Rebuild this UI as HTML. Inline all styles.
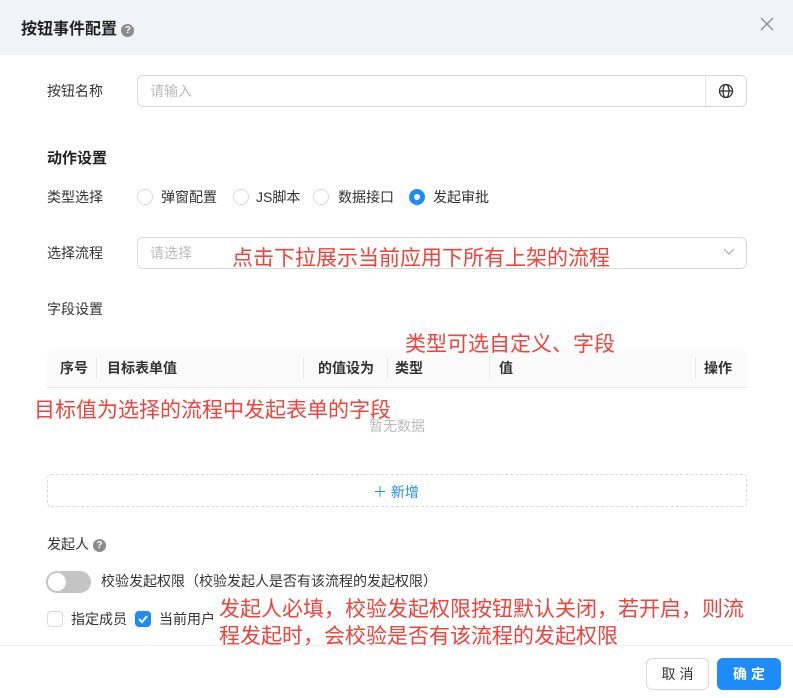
<!DOCTYPE html>
<html><head><meta charset="utf-8"><style>
*{margin:0;padding:0;box-sizing:border-box}
body{width:793px;height:698px;background:#fff;font-family:"Liberation Sans","Noto Sans CJK SC",sans-serif;color:#333;position:relative;overflow:hidden;font-size:14px}
.a{position:absolute;white-space:nowrap}
.red{color:#f2423a;font-size:21px;line-height:25px;z-index:5}
.q{display:inline-block;width:13px;height:13px;border-radius:50%;background:#8c8c8c;color:#fff;font-size:10px;line-height:13px;text-align:center;font-weight:bold;vertical-align:1px}
.radio{position:absolute;width:16px;height:16px;border:1px solid #d9d9d9;border-radius:50%}
.th{position:absolute;top:358px;font-weight:bold;font-size:14px}
.sep{position:absolute;top:357px;width:1px;height:22px;background:#e8e8e8}
</style></head><body>
<div class="a" style="left:0;top:0;width:793px;height:55px;background:#f0f3f8"></div>
<div class="a" style="left:21px;top:15px;font-size:16px;font-weight:bold;color:#222">按钮事件配置 <span class="q">?</span></div>
<svg class="a" style="left:760px;top:17px" width="14" height="14" viewBox="0 0 14 14" stroke="#888" stroke-width="1.3"><path d="M1 1l12 12M13 1L1 13"/></svg>

<div class="a" style="left:47px;top:81px">按钮名称</div>
<div class="a" style="left:137px;top:75px;width:610px;height:32px;border:1px solid #d9d9d9;border-radius:6px"></div>
<div class="a" style="left:705px;top:76px;width:1px;height:30px;background:#e5e5e5"></div>
<div class="a" style="left:150px;top:81px;color:#bbb">请输入</div>
<svg class="a" style="left:718px;top:83px" width="16" height="16" viewBox="0 0 16 16" fill="none" stroke="#333" stroke-width="1.3"><circle cx="8" cy="8" r="6.5"/><ellipse cx="8" cy="8" rx="3" ry="6.5"/><line x1="1.5" y1="8" x2="14.5" y2="8"/></svg>

<div class="a" style="left:47px;top:147px;font-size:15px;font-weight:bold;color:#222">动作设置</div>
<div class="a" style="left:47px;top:187px">类型选择</div>
<div class="radio" style="left:137px;top:189px"></div><div class="a" style="left:161px;top:187px">弹窗配置</div>
<div class="radio" style="left:233px;top:189px"></div><div class="a" style="left:256px;top:187px">JS脚本</div>
<div class="radio" style="left:313px;top:189px"></div><div class="a" style="left:338px;top:187px">数据接口</div>
<div class="radio" style="left:409px;top:189px;border:5px solid #1d8cf8"></div><div class="a" style="left:433px;top:187px">发起审批</div>

<div class="a" style="left:47px;top:243px">选择流程</div>
<div class="a" style="left:137px;top:237px;width:610px;height:32px;border:1px solid #d9d9d9;border-radius:6px"></div>
<div class="a" style="left:150px;top:243px;color:#bbb">请选择</div>
<svg class="a" style="left:723px;top:248px" width="12" height="8" viewBox="0 0 12 8" fill="none" stroke="#aaa" stroke-width="1.2"><path d="M1 1l5 5 5-5"/></svg>
<div class="a red" style="left:232px;top:246px">点击下拉展示当前应用下所有上架的流程</div>

<div class="a" style="left:47px;top:299px">字段设置</div>
<div class="a" style="left:47px;top:349px;width:700px;height:39px;background:#fafafa;border-bottom:1px solid #e8e8e8;border-radius:8px 8px 0 0"></div>
<div class="th" style="left:60px">序号</div><div class="sep" style="left:96px"></div>
<div class="th" style="left:107px">目标表单值</div><div class="sep" style="left:303px"></div>
<div class="th" style="left:318px">的值设为</div><div class="sep" style="left:387px"></div>
<div class="th" style="left:395px">类型</div><div class="sep" style="left:489px"></div>
<div class="th" style="left:499px">值</div><div class="sep" style="left:695px"></div>
<div class="th" style="left:704px">操作</div>
<div class="a red" style="left:405px;top:332px">类型可选自定义、字段</div>
<div class="a red" style="left:34px;top:398px">目标值为选择的流程中发起表单的字段</div>
<div class="a" style="left:369px;top:416px;color:#bbb">暂无数据</div>
<div class="a" style="left:47px;top:474px;width:700px;height:33px;border:1px dashed #d9d9d9;border-radius:4px"></div>
<div class="a" style="left:373px;top:482px;color:#1d8cf8;font-size:14px">＋ 新增</div>

<div class="a" style="left:47px;top:534px">发起人 <span class="q">?</span></div>
<div class="a" style="left:46px;top:571px;width:45px;height:22px;border-radius:11px;background:#c4c4c4"></div>
<div class="a" style="left:48px;top:573px;width:18px;height:18px;border-radius:50%;background:#fff"></div>
<div class="a" style="left:101px;top:571px">校验发起权限（校验发起人是否有该流程的发起权限）</div>
<div class="a" style="left:47px;top:611px;width:16px;height:16px;border:1px solid #d9d9d9;border-radius:4px"></div>
<div class="a" style="left:71px;top:609px">指定成员</div>
<div class="a" style="left:135px;top:611px;width:16px;height:16px;background:#1d8cf8;border-radius:4px"></div>
<svg class="a" style="left:135px;top:611px" width="16" height="16" viewBox="0 0 16 16" fill="none" stroke="#fff" stroke-width="2"><path d="M4 8l3 3 5-6"/></svg>
<div class="a" style="left:159px;top:609px">当前用户</div>
<div class="a red" style="left:219px;top:597px">发起人必填，校验发起权限按钮默认关闭，若开启，则流</div>
<div class="a red" style="left:219px;top:624px">程发起时，会校验是否有该流程的发起权限</div>

<div class="a" style="left:0;top:645px;width:793px;height:1px;background:#eee"></div>
<div class="a" style="left:646px;top:658px;width:63px;height:32px;border:1px solid #d9d9d9;border-radius:6px;text-align:center;line-height:30px;font-size:14px;letter-spacing:4px;padding-left:4px">取消</div>
<div class="a" style="left:717px;top:658px;width:64px;height:32px;background:#1d8cf8;color:#fff;border-radius:6px;text-align:center;line-height:32px;font-size:14px;font-weight:bold;letter-spacing:4px;padding-left:4px">确定</div>
</body></html>
